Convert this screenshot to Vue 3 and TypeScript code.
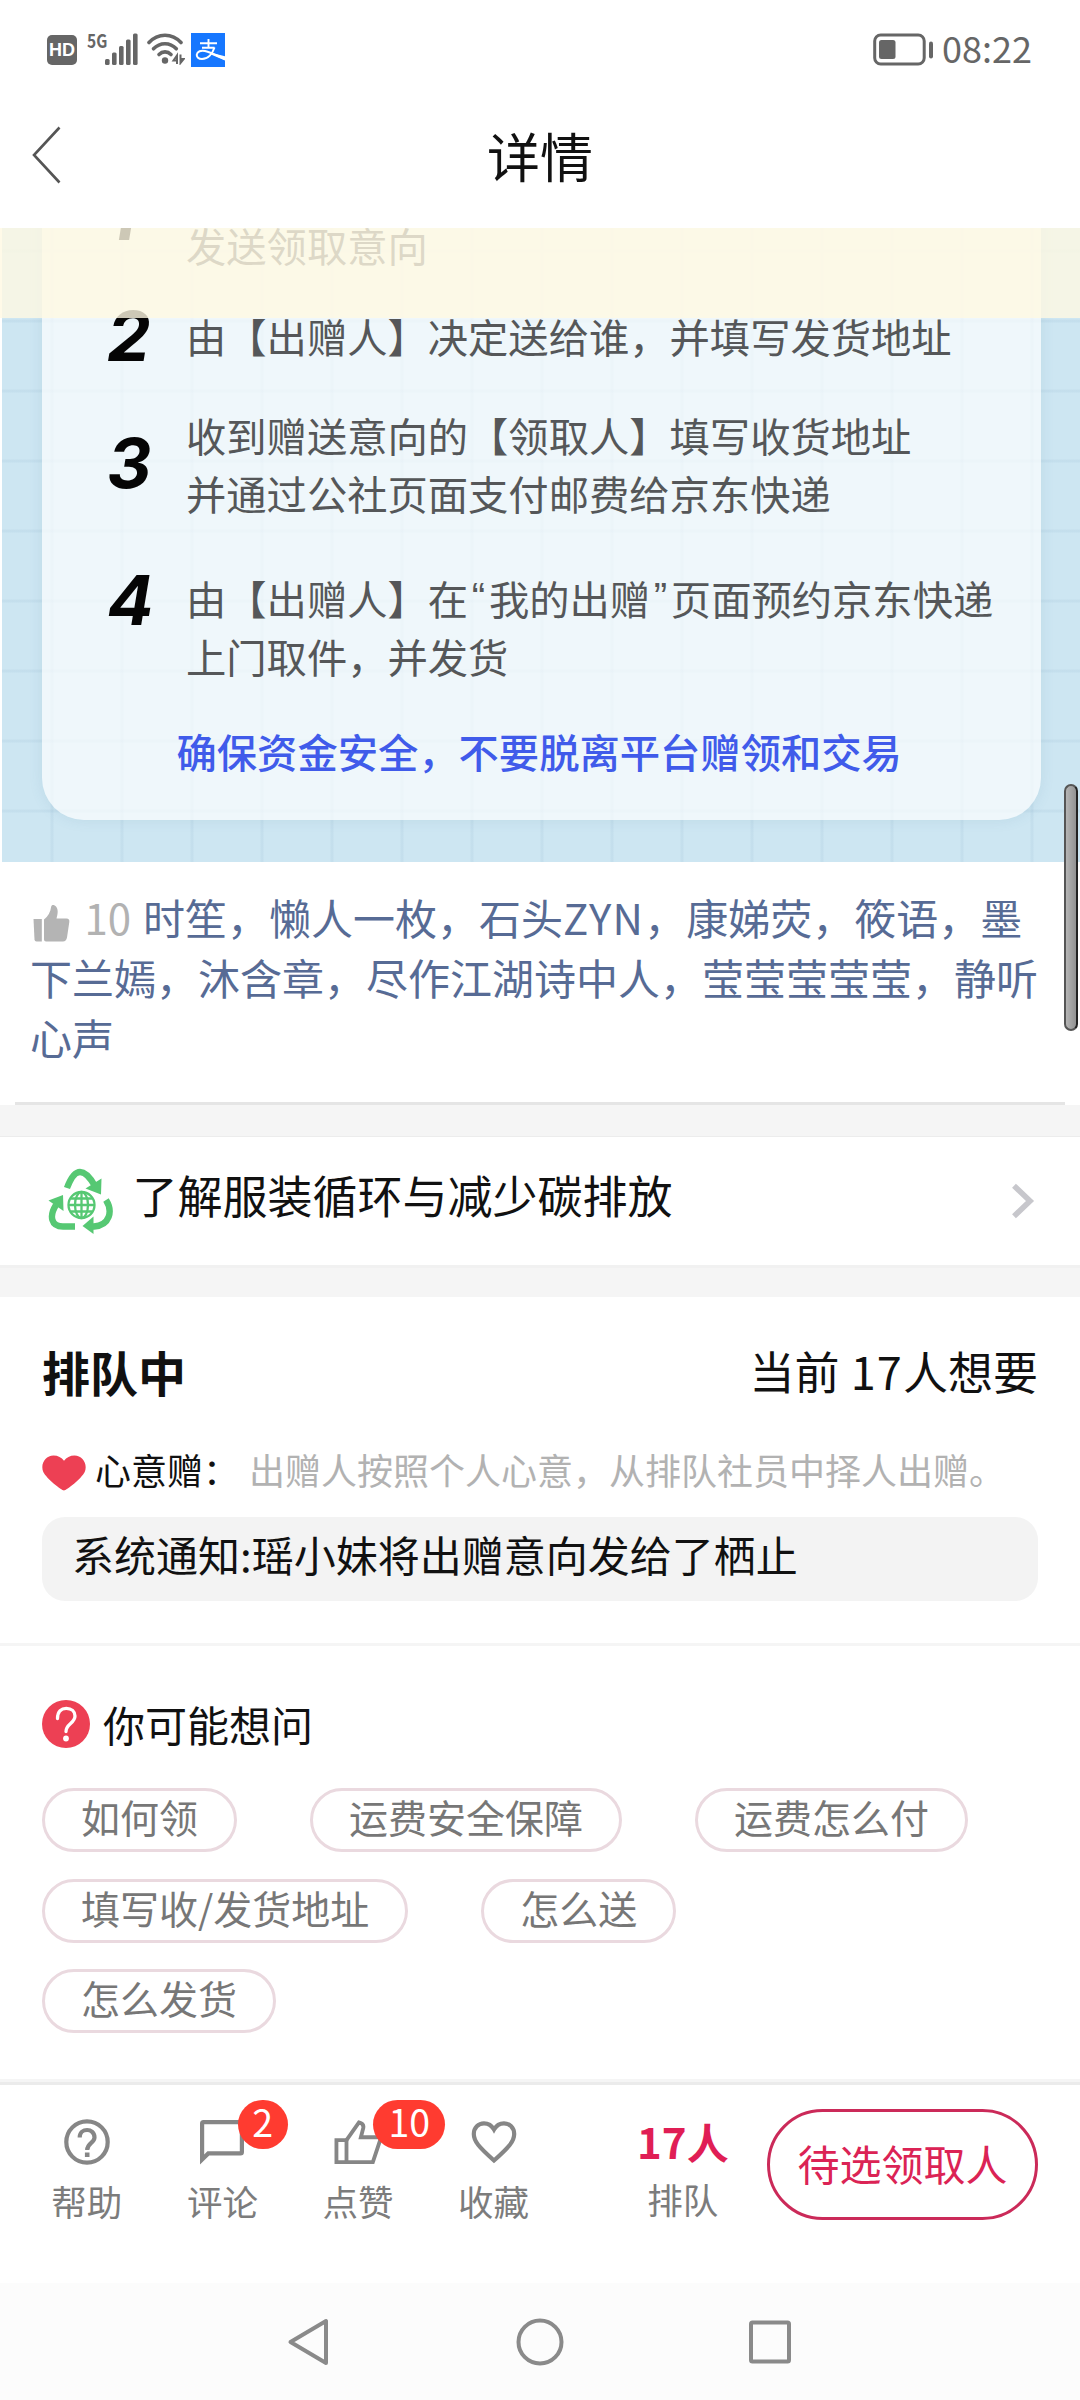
<script setup lang="ts">
interface Step {
  no: string
  lines: string[]
  gap: number
  shift: number
}

const steps: Step[] = [
  { no: '1', lines: ['发送领取意向'], gap: 0, shift: -28.4 },
  { no: '2', lines: ['由【出赠人】决定送给谁，并填写发货地址'], gap: 33.8, shift: 1 },
  { no: '3', lines: ['收到赠送意向的【领取人】填写收货地址', '并通过公社页面支付邮费给京东快递'], gap: 40.6, shift: 28.6 },
  { no: '4', lines: ['由【出赠人】在“我的出赠”页面预约京东快递', '上门取件，并发货'], gap: 47.6, shift: 3 },
]

const splitQuotes = (line: string): string[] => line.split(/([“”])/).filter((s) => s !== '')
const isQuote = (s: string): boolean => s === '“' || s === '”'

const firstLikes: string[] = ['时笙，懒人一枚，石头', 'ZYN', '，康娣荧，筱语，墨']
const moreLikes: string[] = ['下兰嫣，沐含章，尽作江湖诗中人，莹莹莹莹莹，静听', '心声']

const questions: string[][] = [
  ['如何领', '运费安全保障', '运费怎么付'],
  ['填写收/发货地址', '怎么送'],
  ['怎么发货'],
]
</script>

<template>
  <div class="page" lang="zh-CN">
    <header class="status">
      <div class="status-left">
        <span class="hd">HD</span>
        <span class="net">5G</span>
        <svg class="bars" width="33" height="32" viewBox="0 0 33 32" fill="#666">
          <rect x="0" y="26" width="4.6" height="6" rx="1.5" />
          <rect x="7" y="19.5" width="4.6" height="12.5" rx="1.5" />
          <rect x="14" y="13" width="4.6" height="19" rx="1.5" />
          <rect x="21" y="6.5" width="4.6" height="25.5" rx="1.5" />
          <rect x="28" y="0.5" width="4.6" height="31.5" rx="1.5" />
        </svg>
        <svg class="wifi" width="38" height="32" viewBox="0 0 38 32" fill="none" stroke="#666" stroke-width="3.6" stroke-linecap="round">
          <path d="M2 9.5C11 -0.2 25 -0.2 34 9.5" />
          <path d="M6.5 15.8C13 9 23 9 29.3 15.8" />
          <path d="M12 21.5C15.5 18 20.5 18 24 21.5" />
          <circle cx="18" cy="27.5" r="3.2" fill="#666" stroke="none" />
          <path d="M30 31V22.5L26.500 27.500H30M33.500 21.500V30L36.800 26H33.500" stroke-width="2" stroke-linecap="butt" />
        </svg>
        <svg class="pay" width="34" height="34" viewBox="0 0 34 34" fill="none" stroke="#fff">
          <rect width="34" height="34" fill="#1677ff" stroke="none" />
          <path d="M9 10.2H26M17.5 6V14.5M11 14.8H23.5" stroke-width="1.9" />
          <path d="M23.5 14.5C21.5 20.5 17 26 11 26C7.500 26 5.500 24 5.800 21.500C6.200 18.500 10 17 14 18C20 19.500 27 23 34 26" stroke-width="2" />
          <path d="M20 19.800L34 23.300V27.500L19.300 21.200Z" fill="#fff" stroke="none" />
        </svg>
      </div>
      <div class="status-right">
        <svg width="62" height="34" viewBox="0 0 62 34" fill="none">
          <rect x="1.700" y="2" width="49.500" height="29" rx="6" stroke="#666" stroke-width="3" />
          <rect x="6" y="7" width="16.500" height="19" rx="2.500" fill="#666" />
          <rect x="56" y="8.500" width="4" height="17" rx="2" fill="#666" />
        </svg>
        <span class="clock">08:22</span>
      </div>
    </header>

    <nav class="title-bar">
      <svg class="back" width="30" height="58" viewBox="0 0 30 58" fill="none" stroke="#555" stroke-width="2.600">
        <path d="M28.500 1.500L3 29L28.500 56.500" />
      </svg>
      <h1>详情</h1>
    </nav>

    <section class="banner">
      <div class="banner-bg">
        <div class="guide">
          <div v-for="s in steps" :key="s.no" class="step" :style="{ marginTop: s.gap + 'px' }">
            <span class="no" :style="{ marginTop: s.shift + 'px' }">{{ s.no }}</span>
            <div class="step-text">
              <div v-for="line in s.lines" :key="line" class="step-line"><span v-for="(part, i) in splitQuotes(line)" :key="i" :class="{ quote: isQuote(part) }">{{ part }}</span></div>
            </div>
          </div>
          <p class="safe">确保资金安全，不要脱离平台赠领和交易</p>
        </div>
      </div>
      <div class="notice-strip"></div>
    </section>

    <section class="likes">
      <div class="like-line">
        <svg class="thumb" width="37" height="38" viewBox="0 0 37 38" fill="#b4b4b4">
          <path d="M0.500 15H8.800V37.500H3.500Q1.600 37.500 1.500 35.500Z" />
          <path d="M11 15.500C15 12.500 17.500 8 18.200 2.500C18.500 0.300 21.500 0.300 23.200 2.800C25.500 6 24.800 10 23.500 14.500H33.500Q36.800 14.700 36.300 18L34 33.500Q33.200 37.500 30 37.500H13Q11 37.500 11 35.500Z" />
        </svg>
        <span class="count">10</span>
        <span>{{ firstLikes[0] }}</span>
        <span class="latin">{{ firstLikes[1] }}</span>
        <span>{{ firstLikes[2] }}</span>
      </div>
      <div v-for="line in moreLikes" :key="line" class="like-line">{{ line }}</div>
    </section>

    <div class="gap first"></div>

    <section class="eco">
      <svg class="recycle" width="66" height="66" viewBox="0 0 66 66" fill="none" stroke="#56c873">
        <g stroke-width="6.400">
          <path d="M19 20C22 12 26 4 32 4C38 4 43 11 47 18" />
          <path d="M58 32C65 43 62 57 46 58.500H42" />
          <path d="M27 58.500H15C3 58.500 1 48 8 37" />
        </g>
        <g fill="#56c873" stroke="none">
          <path d="M37.500 20.500L53.500 10.500L53 26.500Z" />
          <path d="M45.500 48.500V66L34.500 58Z" />
          <path d="M0.500 32.500L15 27L15.500 43Z" />
        </g>
        <g stroke-width="2.300">
          <circle cx="33.500" cy="37" r="13" />
          <ellipse cx="33.500" cy="37" rx="6.500" ry="13" />
          <path d="M33.500 24V50M20.500 37H46.500M22.500 30.500H44.500M22.500 43.500H44.500" />
        </g>
      </svg>
      <span class="eco-text">了解服装循环与减少碳排放</span>
      <svg class="arrow" width="24" height="36" viewBox="0 0 24 36" fill="none" stroke="#c7c7cc" stroke-width="5.600">
        <path d="M3 2.800L19 18L3 33.200" />
      </svg>
    </section>

    <div class="gap second"></div>

    <section class="queue">
      <div class="queue-head">
        <strong>排队中</strong>
        <span>当前 <span class="num">17</span>人想要</span>
      </div>
      <div class="rule">
        <svg width="44" height="36" viewBox="0 0 44 36" fill="#ed4054">
          <path d="M22 35.500C19.500 35.500 4.500 23.500 1.300 17C-2 9 3.500 0.500 11.500 0.500C16 0.500 19.500 2.500 22 5.800C24.500 2.500 28 0.500 32.500 0.500C40.500 0.500 46 9 42.700 17C39.500 23.500 24.500 35.500 22 35.500Z" />
        </svg>
        <span class="rule-name">心意赠：</span>
        <span class="rule-desc">出赠人按照个人心意，从排队社员中择人出赠。</span>
      </div>
      <div class="sys">系统通知:瑶小妹将出赠意向发给了栖止</div>
    </section>

    <section class="faq">
      <div class="faq-head">
        <svg width="48" height="48" viewBox="0 0 48 48" fill="none">
          <circle cx="24" cy="24" r="24" fill="#ed4054" />
          <path d="M15.500 18.500C15.500 11 19.500 8.300 24.300 8.300C29.500 8.300 33 11.500 33 16C33 23.500 24 23.500 24 31.500" stroke="#fff" stroke-width="3.300" stroke-linecap="round" />
          <circle cx="24" cy="38.500" r="2.900" fill="#fff" />
        </svg>
        <span>你可能想问</span>
      </div>
      <div v-for="(row, i) in questions" :key="i" class="pill-row">
        <span v-for="q in row" :key="q" class="pill">{{ q }}</span>
      </div>
    </section>

    <footer class="actions">
      <div class="act">
        <svg width="46" height="46" viewBox="0 0 46 46" fill="none" stroke="#868686" stroke-width="4.200">
          <circle cx="23" cy="23" r="20.700" />
          <path d="M15.700 18.500C15.700 8.500 30.500 8.500 30.500 18.500C30.500 24 23.200 24 23.200 31" />
          <path d="M23.200 33.500V38" stroke-width="4.600" />
        </svg>
        <span>帮助</span>
      </div>
      <div class="act">
        <svg width="46" height="46" viewBox="0 0 46 46" fill="none" stroke="#868686" stroke-width="4.200">
          <path d="M3.100 40.500V4.500Q3.100 3.100 4.500 3.100H41.500Q42.900 3.100 42.900 4.500V33Q42.900 34.400 41.500 34.400H9.300Z" />
        </svg>
        <span>评论</span>
        <b class="badge one">2</b>
      </div>
      <div class="act">
        <svg width="50" height="48" viewBox="0 0 50 48" fill="none" stroke="#868686" stroke-width="4">
          <path d="M2.500 22H13V45H2.500Z" />
          <path d="M13 22L26 3.500C30.500 4.500 31 7 30.500 9.500L28 19H47.500Q48.800 19.500 48.300 21.500L40.500 45H13" />
        </svg>
        <span>点赞</span>
        <b class="badge two">10</b>
      </div>
      <div class="act">
        <svg width="46" height="46" viewBox="0 0 46 46" fill="none" stroke="#868686" stroke-width="4.200">
          <path d="M23 41.500C8 28 2.800 22.500 2.800 15C2.800 8.500 7.500 4.300 13 4.300C17 4.300 20.800 6.600 23 10.500C25.200 6.600 29 4.300 33 4.300C38.500 4.300 43.200 8.500 43.200 15C43.200 22.500 38 28 23 41.500Z" />
        </svg>
        <span>收藏</span>
      </div>
      <div class="waiting">
        <strong>17人</strong>
        <span>排队</span>
      </div>
      <button class="choose">待选领取人</button>
    </footer>

    <div class="system-nav">
      <svg width="44" height="50" viewBox="0 0 44 50" fill="none" stroke="#8a8a8a" stroke-width="4" stroke-linejoin="round">
        <path d="M39 4V46L3.500 25Z" />
      </svg>
      <svg width="50" height="50" viewBox="0 0 50 50" fill="none" stroke="#8a8a8a" stroke-width="4">
        <circle cx="25" cy="25" r="21.500" />
      </svg>
      <svg width="44" height="50" viewBox="0 0 44 50" fill="none" stroke="#8a8a8a" stroke-width="4">
        <rect x="1" y="5.500" width="38" height="39" rx="1.500" stroke-width="4" transform="translate(1 0)" />
      </svg>
    </div>

    <div class="scrollbar"></div>
  </div>
</template>

<style>
body {
  margin: 0;
  background: #fff;
}
</style>

<style scoped>
.page {
  position: relative;
  width: 1080px;
  height: 2400px;
  overflow: hidden;
  background: #fff;
  color: #111;
  font-family: 'Noto Sans CJK SC', sans-serif;
  white-space: nowrap;
}
svg {
  display: block;
  flex: none;
}
.status {
  height: 100px;
  display: flex;
  justify-content: space-between;
  box-sizing: border-box;
  padding: 33px 48px 0 47px;
}
.status-left,
.status-right {
  display: flex;
  align-items: flex-start;
}
.hd {
  width: 30px;
  height: 30px;
  margin-top: 2px;
  border-radius: 5px;
  background: #666;
  color: #fff;
  font: bold 18px/31px 'Liberation Sans', sans-serif;
  text-align: center;
}
.net {
  width: 18px;
  margin-left: 10px;
  color: #666;
  font-size: 19px;
  font-weight: 700;
  line-height: 13px;
  transform: scaleX(0.82);
  transform-origin: left;
}
.wifi {
  margin-left: 9px;
}
.pay {
  margin-left: 6px;
}
.clock {
  margin-left: 7px;
  height: 34px;
  color: #666;
  font-size: 36px;
  line-height: 29px;
}
.title-bar {
  height: 128px;
  display: flex;
  align-items: flex-start;
}
.back {
  margin: 26px 0 0 30.500px;
}
h1 {
  flex: 1;
  margin: 18px 60.500px 0 0;
  font-size: 53px;
  font-weight: 400;
  line-height: 74px;
  text-align: center;
}
.banner {
  position: relative;
  height: 634px;
  overflow: hidden;
}
.banner-bg {
  height: 634px;
  margin-left: 2px;
  display: flow-root;
  background:
    repeating-linear-gradient(90deg, transparent 0 48px, rgba(120, 160, 190, 0.1) 49px 51px, transparent 52px 70px),
    repeating-linear-gradient(180deg, transparent 0 21px, rgba(120, 160, 190, 0.1) 22px 24px, transparent 25px 70px),
    #cde6f2;
}
.guide {
  height: 604.400px;
  margin: -12.400px 39px 0 40px;
  border-radius: 0 0 42px 42px;
  background: rgba(255, 255, 255, 0.67);
  box-shadow: 0 0 14px rgba(70, 120, 160, 0.12);
  display: flow-root;
}
.step {
  display: flex;
  align-items: flex-start;
  padding-left: 65px;
}
.no {
  width: 79px;
  height: 57.600px;
  color: #050505;
  font: italic 700 69px/57.600px Inter, 'Liberation Sans', sans-serif;
}
.step-text {
  color: #555759;
  font-size: 40.300px;
  line-height: 57.600px;
}
.step-line {
  display: flex;
  height: 57.600px;
}
.quote {
  width: 20.800px;
  font-family: 'Liberation Sans', sans-serif;
  text-align: center;
}
.safe {
  margin: 37.600px 0 0 134.500px;
  color: #405bea;
  font-size: 40.300px;
  font-weight: 500;
  line-height: 57.600px;
}
.notice-strip {
  position: absolute;
  inset: 0 0 auto 0;
  height: 90px;
  background: rgba(255, 249, 226, 0.8);
}
.likes {
  height: 240px;
  margin: 0 15px;
  padding: 25px 15px 0 15px;
  box-sizing: border-box;
}
.like-line {
  display: flex;
  height: 59.900px;
  color: #576b95;
  font-size: 42px;
  line-height: 59.900px;
}
.thumb {
  margin: 17px 0 0 2.500px;
}
.count {
  width: 58.500px;
  margin-left: 15px;
  color: #b2b2b2;
}
.latin {
  letter-spacing: 1.300px;
}
.gap {
  box-sizing: border-box;
  background: #f5f5f5;
}
.gap.first {
  height: 35px;
  border-bottom: 1px solid #ececec;
  background:
    linear-gradient(#e5e5e5, #e5e5e5) 15px 0 / 1050px 3px no-repeat,
    linear-gradient(#fff, #fff) 0 0 / 1080px 3px no-repeat,
    #f5f5f5;
}
.eco {
  height: 128px;
  display: flex;
  align-items: flex-start;
}
.recycle {
  margin: 31px 0 0 48px;
}
.eco-text {
  margin: 24.500px 0 0 18.500px;
  font-size: 45px;
  line-height: 66px;
}
.arrow {
  margin: 46px 45px 0 auto;
}
.gap.second {
  height: 32px;
  border-top: 3px solid #f1f1f1;
}
.queue {
  height: 349px;
  box-sizing: border-box;
  padding: 41px 42px 0;
  border-bottom: 3px solid #f5f5f5;
}
.queue-head {
  display: flex;
  justify-content: space-between;
  height: 66px;
  font-size: 45px;
  line-height: 66px;
}
.queue-head strong {
  font-size: 48px;
}
.num {
  margin-left: 1px;
  letter-spacing: 1.200px;
}
.rule {
  display: flex;
  align-items: flex-start;
  height: 54px;
  margin-top: 38px;
  font-size: 36px;
  line-height: 54px;
}
.rule svg {
  margin-top: 13px;
}
.rule-name {
  width: 154px;
  margin-left: 9px;
}
.rule-desc {
  color: #b2b2b2;
}
.sys {
  height: 84px;
  margin-top: 21px;
  padding-left: 30px;
  border-radius: 23px;
  background: #f3f3f3;
  font-size: 42px;
  line-height: 74px;
}
.faq {
  height: 433px;
  box-sizing: border-box;
  padding: 54px 42px 0;
}
.faq-head {
  display: flex;
  height: 88px;
  font-size: 42px;
  line-height: 48px;
}
.faq-head span {
  margin-left: 13px;
}
.pill-row {
  display: flex;
  gap: 73px;
  margin-bottom: 26.500px;
}
.pill {
  height: 64px;
  box-sizing: border-box;
  padding: 0 36px;
  border: 3px solid #ead9df;
  border-radius: 32px;
  color: #777;
  font-size: 39px;
  line-height: 50px;
}
.actions {
  height: 204px;
  box-sizing: border-box;
  display: flex;
  align-items: flex-start;
  border-top: 3px solid #f5f5f5;
  box-shadow: inset 0 3px 0 #ebebeb;
  padding-left: 19px;
}
.act {
  position: relative;
  width: 135.600px;
  height: 140px;
  padding-top: 37px;
  display: flex;
  flex-direction: column;
  align-items: center;
  color: #7c7c7c;
  font-size: 35.500px;
  line-height: 50px;
}
.act svg {
  height: 46px;
}
.act span {
  margin-top: 10.500px;
}
.badge {
  position: absolute;
  top: 18px;
  height: 49px;
  border-radius: 25px;
  background: #ff3b30;
  color: #fff;
  font-size: 37.500px;
  font-weight: 400;
  line-height: 42px;
  text-align: center;
}
.badge.one {
  left: 83px;
  width: 50px;
}
.badge.two {
  left: 83px;
  width: 72px;
}
.waiting {
  width: 106px;
  margin-left: 68.500px;
  padding-top: 29px;
  display: flex;
  flex-direction: column;
  align-items: center;
  color: #7c7c7c;
  font-size: 35.500px;
  line-height: 50px;
}
.waiting strong {
  color: #e01e55;
  font-size: 42px;
  line-height: 60px;
  margin-bottom: 3px;
}
.choose {
  width: 271px;
  height: 111px;
  margin: 27px 42px 0 auto;
  padding: 0 0 3px;
  border: 3px solid #cb2a59;
  border-radius: 56px;
  background: transparent;
  color: #db2355;
  font: 400 42px/60px 'Noto Sans CJK SC', sans-serif;
}
.system-nav {
  height: 117px;
  display: flex;
  gap: 184px;
  box-sizing: border-box;
  padding: 34px 0 0 287px;
  background: #fcfcfc;
}
.scrollbar {
  position: absolute;
  left: 1064px;
  top: 784px;
  width: 14px;
  height: 247px;
  box-sizing: border-box;
  border: 2px solid #555;
  border-right-color: #222;
  border-radius: 7px;
  background: linear-gradient(90deg, #b5b5b5, #929292);
}
</style>
